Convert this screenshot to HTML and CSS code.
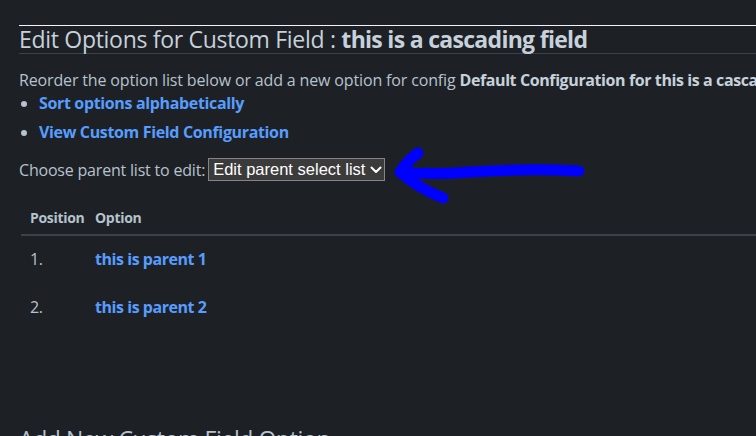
FILE: index.html
```html
<!DOCTYPE html>
<html lang="en">
<head>
<meta charset="utf-8">
<title>Edit Options for Custom Field</title>
<link rel="stylesheet" href="styles.css">
</head>
<body>
<div class="page">
  <div class="topline"></div>
  <h1 class="title">Edit Options for Custom Field : <b>this is a cascading field</b></h1>
  <p class="intro">Reorder the option list below or add a new option for config <b>Default Configuration for this is a cascading field</b></p>
  <ul class="actions">
    <li><a href="#">Sort options alphabetically</a></li>
    <li><a href="#">View Custom Field Configuration</a></li>
  </ul>
  <div class="chooser">
    <label for="parent">Choose parent list to edit:</label>
    <span class="select-wrap">
      <select id="parent" class="parent-select">
        <option>Edit parent select list</option>
        <option>this is parent 1</option>
        <option>this is parent 2</option>
      </select>
      <svg class="chevron" width="12" height="8" viewBox="0 0 12 8" aria-hidden="true"><path d="M1.5 1.5 L6 6 L10.5 1.5" fill="none" stroke="#ffffff" stroke-width="2" stroke-linecap="round" stroke-linejoin="round"/></svg>
    </span>
  </div>
  <table class="options">
    <thead>
      <tr><th class="col-pos">Position</th><th>Option</th></tr>
    </thead>
    <tbody>
      <tr><td class="col-pos">1.</td><td><a href="#">this is parent 1</a></td></tr>
      <tr><td class="col-pos">2.</td><td><a href="#">this is parent 2</a></td></tr>
    </tbody>
  </table>
  <h2 class="subtitle">Add New Custom Field Option</h2>
</div>
<svg class="annotation" width="756" height="436" viewBox="0 0 756 436" aria-hidden="true">
  <path d="M579 171 C540 169 500 170 470 172 C445 174 420 174 401 172" fill="none" stroke="#0000fe" stroke-width="11" stroke-linecap="round" stroke-linejoin="round"/>
  <path d="M418 153 C410 159 404 166 400 172 C412 183 428 192 443 198" fill="none" stroke="#0000fe" stroke-width="11" stroke-linecap="round" stroke-linejoin="round"/>
</svg>
</body>
</html>
```

FILE: styles.css
```css
html, body {
  margin: 0;
  padding: 0;
  background: #1d2125;
  overflow: hidden;
  height: 436px;
}

body {
  font-family: "Open Sans", "Noto Sans", sans-serif;
  font-size: 16px;
  color: #b6c2cf;
  color-scheme: dark;
  position: relative;
}

.page {
  padding: 25px 0 0 19px;
  width: 900px;
}

.topline {
  border-top: 1px solid #f2f4f7;
}

.title {
  margin: 0;
  font-size: 23px;
  line-height: 27px;
  font-weight: 400;
  color: #c7d1db;
  border-bottom: 1px solid #3a424b;
  white-space: nowrap;
  letter-spacing: -0.3px;
}

.title b {
  font-weight: 700;
  letter-spacing: -0.7px;
}

.intro {
  margin: 16px 0 0;
  line-height: 20px;
  white-space: nowrap;
  letter-spacing: -0.15px;
}

.intro b {
  color: #c7d1db;
  letter-spacing: -0.4px;
}

.actions {
  margin: 3px 0 0;
  padding-left: 20px;
}

.actions li {
  line-height: 20px;
  margin-bottom: 9px;
  letter-spacing: -0.35px;
}

.actions li:last-child {
  margin-bottom: 0;
}

a {
  color: #579dff;
  font-weight: 700;
  text-decoration: none;
}

.chooser {
  margin-top: 16px;
  display: flex;
  align-items: center;
  gap: 3px;
  height: 23px;
  letter-spacing: -0.2px;
}

.select-wrap {
  position: relative;
  display: inline-flex;
}

.parent-select {
  appearance: none;
  -webkit-appearance: none;
  font-family: "Liberation Sans", Arial, sans-serif;
  font-size: 16.5px;
  letter-spacing: 0;
  height: 23px;
  line-height: 21px;
  padding: 0 18px 0 4px;
  background: #3b3b3b;
  color: #ffffff;
  border: 1px solid #858585;
  border-radius: 0;
}

.chevron {
  position: absolute;
  right: 3px;
  top: 8px;
  pointer-events: none;
}

.options {
  margin: 20px 0 0 2px;
  border-collapse: collapse;
  width: 760px;
}

.options th {
  text-align: left;
  font-size: 14px;
  font-weight: 700;
  color: #b6c2cf;
  height: 33px;
  padding: 0 0 0 9px;
  border-bottom: 2px solid #3a424b;
  letter-spacing: -0.3px;
}

.options td {
  height: 45px;
  padding: 0 0 3px 9px;
  letter-spacing: -0.3px;
}

.options td a {
  letter-spacing: -0.45px;
}

.options .col-pos {
  width: 56px;
}

.subtitle {
  margin: 93px 0 0;
  font-size: 23px;
  line-height: 28px;
  font-weight: 400;
  color: #b6c2cf;
  white-space: nowrap;
  letter-spacing: -0.4px;
}

.annotation {
  position: absolute;
  left: 0;
  top: 0;
  pointer-events: none;
}
```
